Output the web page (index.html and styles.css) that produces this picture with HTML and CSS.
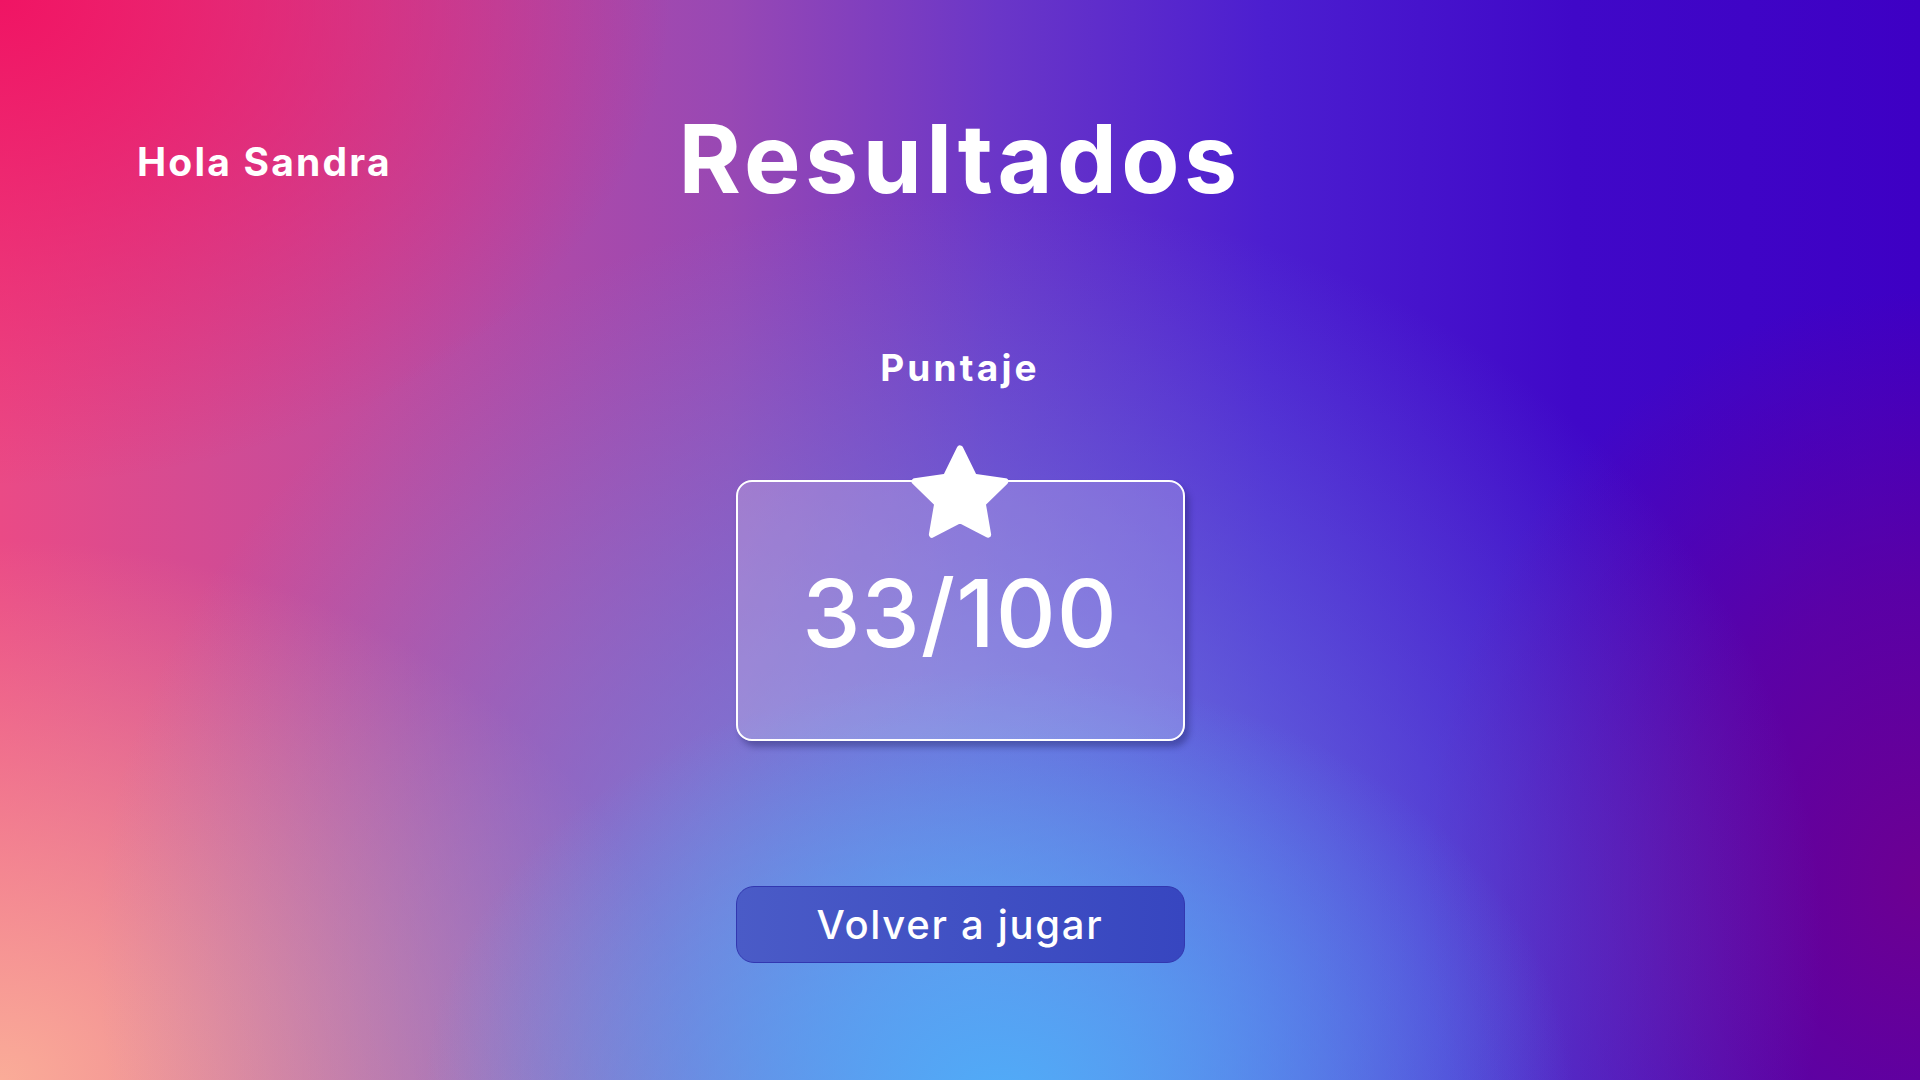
FILE: index.html
```html
<!DOCTYPE html>
<html lang="es">
<head>
<meta charset="utf-8">
<title>Resultados</title>
<link rel="stylesheet" href="styles.css">
</head>
<body>
<div class="page">
  <header class="header">
    <div class="greeting">Hola Sandra</div>
    <h1 class="title">Resultados</h1>
    <div class="spacer"></div>
  </header>
  <main class="content">
    <h2 class="label">Puntaje</h2>
    <div class="card">
      <svg class="star" viewBox="1 1 22 21" aria-hidden="true">
        <path d="M12 2l3.09 6.26L22 9.27l-5 4.87 1.18 6.88L12 17.77l-6.18 3.25L7 14.14 2 9.27l6.91-1.01L12 2z" fill="#fff" stroke="#fff" stroke-width="1.4" stroke-linejoin="round"/>
      </svg>
      <div class="score">33/100</div>
    </div>
    <button class="btn">Volver a jugar</button>
  </main>
</div>
</body>
</html>
```
FILE: styles.css
```css
* { box-sizing: border-box; }
html, body { margin: 0; padding: 0; }
body {
  font-family: "Inter", "Open Sans", sans-serif;
  color: #fff;
}
.page {
  width: 1920px;
  height: 1080px;
  overflow: hidden;
  background:
    radial-gradient(ellipse 30% 40% at 52% 102%, rgba(80,172,248,1) 0%, rgba(80,172,248,0.5) 50%, rgba(80,172,248,0) 100%),
    radial-gradient(ellipse 45% 70% at 50% 88%, rgba(110,150,232,0.85) 0%, rgba(110,140,228,0.45) 50%, rgba(110,140,228,0) 100%),
    radial-gradient(ellipse 36% 50% at 0% 100%, rgba(250,172,152,1) 0%, rgba(250,172,152,0.5) 50%, rgba(250,172,152,0) 100%),
    radial-gradient(ellipse 26% 55% at 100% 82%, rgba(108,0,146,1) 0%, rgba(108,0,146,0.6) 50%, rgba(108,0,146,0) 100%),
    radial-gradient(ellipse 35% 45% at 0% 0%, rgba(240,20,100,1) 0%, rgba(240,20,100,0) 100%),
    linear-gradient(90deg, #ea4a86 0%, #c04c9e 20%, #9848b4 38%, #6a36c8 52%, #4c1ed0 66%, #4008c8 82%, #3e00c4 100%);
}
.header {
  display: grid;
  grid-template-columns: 1fr auto 1fr;
  align-items: center;
  padding-top: 104px;
}
.greeting {
  padding-left: 137px;
  padding-top: 5px;
  font-size: 39px;
  font-weight: 700;
  letter-spacing: 2.2px;
}
.title {
  margin: 0;
  font-size: 95px;
  line-height: 110px;
  font-weight: 700;
  letter-spacing: 4.4px;
}
.content {
  display: flex;
  flex-direction: column;
  align-items: center;
}
.label {
  margin: 134px 0 0;
  font-size: 37px;
  line-height: 40px;
  font-weight: 700;
  letter-spacing: 3.2px;
}
.card {
  position: relative;
  margin-top: 92px;
  width: 449px;
  height: 261px;
  border: 2px solid #fff;
  border-radius: 16px;
  background: rgba(255, 255, 255, 0.2);
  box-shadow: 4px 6px 6px rgba(20, 20, 80, 0.35);
  display: flex;
  justify-content: center;
  padding-top: 76px;
}
.star {
  position: absolute;
  left: 50%;
  top: -38px;
  width: 100px;
  height: 95px;
  transform: translateX(-50%);
}
.score {
  font-size: 93px;
  line-height: 110px;
  font-weight: 500;
  letter-spacing: 1px;
}
.btn {
  margin-top: 145px;
  width: 449px;
  height: 77px;
  border: 1px solid #3237b0;
  border-radius: 18px;
  background: linear-gradient(90deg, #4a5bc7, #3746c0);
  color: #fff;
  font-family: "Inter", "Open Sans", sans-serif;
  font-size: 40px;
  font-weight: 500;
  letter-spacing: 1.7px;
  padding: 0;
}
```
